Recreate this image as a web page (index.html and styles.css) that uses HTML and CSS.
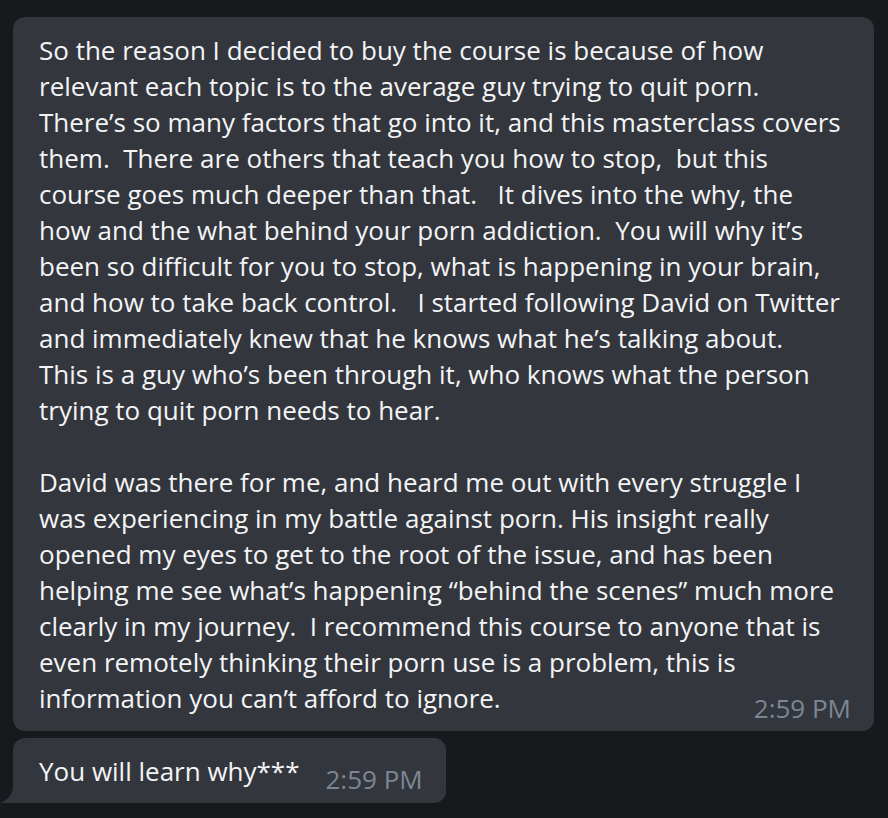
FILE: index.html
```html
<!DOCTYPE html>
<html lang="en">
<head>
    <meta charset="UTF-8">
    <meta name="viewport" content="width=device-width, initial-scale=1">
    <title>Chat</title>
    <link rel="stylesheet" href="styles.css">
</head>
<body>
<div class="chat">
    <div class="bubble bubbleLong">
        <p class="msgText">So the reason I decided to buy the course is because of how relevant each topic is to the average guy trying to quit porn.  There’s so many factors that go into it, and this masterclass covers them.  There are others that teach you how to stop,  but this course goes much deeper than that.   It dives into the why, the how and the what behind your porn addiction.  You will why it’s been so difficult for you to stop, what is happening in your brain, and how to take back control.   I started following David on Twitter and immediately knew that he knows what he’s talking about.<br>This is a guy who’s been through it, who knows what the person trying to quit porn needs to hear.

David was there for me, and heard me out with every struggle I was experiencing in my battle against porn. His insight really opened my eyes to get to the root of the issue, and has been helping me see what’s happening “behind the scenes” much more clearly in my journey.  I recommend this course to anyone that is even remotely thinking their porn use is a problem, this is information you can’t afford to ignore.<span class="msgTime msgTimeFloat">2:59 PM</span></p>
    </div>
    <div class="bubble bubbleShort">
        <p class="msgText">You will learn why***</p>
        <span class="msgTime">2:59 PM</span>
        <svg class="tail" width="14" height="18" viewBox="0 0 14 18"><path d="M14 0 V18 H0 C6 16 12 11 14 0 Z" fill="#33363d"/></svg>
    </div>
</div>
</body>
</html>
```

FILE: styles.css
```css
body, html {
    margin: 0;
    height: 100%;
}
body {
    background: #18191d;
    font-family: "Open Sans", sans-serif;
    color: #f3f4f5;
}
.chat {
    display: flex;
    flex-direction: column;
    align-items: flex-start;
    gap: 7px;
    padding: 17px 0 0 13px;
}
.bubble {
    background: #33363d;
    border-radius: 12px;
    position: relative;
}
.bubbleLong {
    width: 861px;
    box-sizing: border-box;
    padding: 15px 26px 15px 26px;
}
.msgText {
    margin: 0;
    font-size: 26px;
    line-height: 36px;
    white-space: pre-wrap;
}
.msgTime {
    font-size: 26px;
    line-height: 36px;
    color: #7c8793;
}
.msgTimeFloat {
    float: right;
    margin: 10px -3px -10px 0;
}
.bubbleShort {
    display: flex;
    align-items: flex-end;
    gap: 26px;
    padding: 15px 23px 6px 26px;
    border-bottom-left-radius: 0;
    margin-bottom: 15px;
}
.bubbleShort .msgText {
    margin-bottom: 8px;
}
.tail {
    position: absolute;
    left: -13px;
    bottom: 0;
}
```
